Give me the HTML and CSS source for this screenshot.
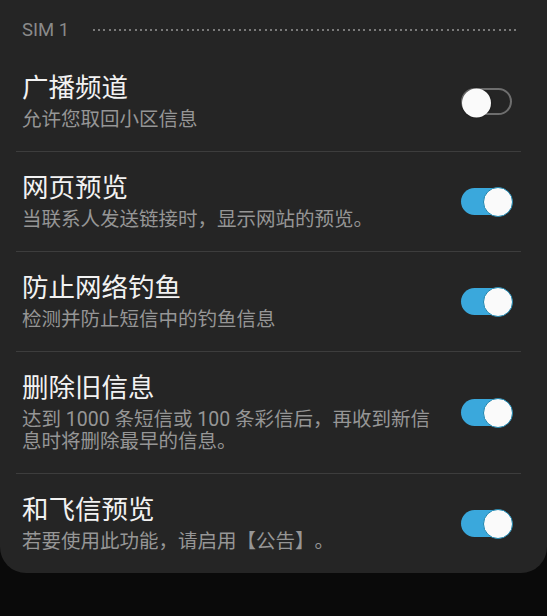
FILE: index.html
```html
<!DOCTYPE html>
<html lang="zh-CN">
<head>
<meta charset="utf-8">
<link rel="stylesheet" href="styles.css">
</head>
<body>
<div class="card">
  <div class="header">
    <span class="header-label">SIM 1</span>
    <span class="header-dots"></span>
  </div>

  <div class="row">
    <div class="text">
      <div class="title">广播频道</div>
      <div class="sub">允许您取回小区信息</div>
    </div>
    <div class="toggle off"><span class="knob"></span></div>
  </div>
  <hr class="divider">

  <div class="row">
    <div class="text">
      <div class="title">网页预览</div>
      <div class="sub">当联系人发送链接时，显示网站的预览。</div>
    </div>
    <div class="toggle on"><span class="knob"></span></div>
  </div>
  <hr class="divider">

  <div class="row">
    <div class="text">
      <div class="title">防止网络钓鱼</div>
      <div class="sub">检测并防止短信中的钓鱼信息</div>
    </div>
    <div class="toggle on"><span class="knob"></span></div>
  </div>
  <hr class="divider">

  <div class="row">
    <div class="text">
      <div class="title">删除旧信息</div>
      <div class="sub">达到 1000 条短信或 100 条彩信后，再收到新信息时将删除最早的信息。</div>
    </div>
    <div class="toggle on"><span class="knob"></span></div>
  </div>
  <hr class="divider">

  <div class="row">
    <div class="text">
      <div class="title">和飞信预览</div>
      <div class="sub">若要使用此功能，请启用【公告】。</div>
    </div>
    <div class="toggle on"><span class="knob"></span></div>
  </div>
</div>
</body>
</html>
```

FILE: styles.css
```css
html, body {
  margin: 0;
  padding: 0;
  background: #0a0a0a;
}

body {
  width: 547px;
  height: 616px;
  overflow: hidden;
  font-family: Roboto, "Noto Sans CJK SC", sans-serif;
  text-spacing-trim: space-all;
}

.card {
  background: #252525;
  border-radius: 0 0 26px 26px;
}

.header {
  display: flex;
  align-items: center;
  height: 52px;
  box-sizing: border-box;
  padding: 8px 29px 0 22px;
}

.header-label {
  font-family: Roboto, sans-serif;
  font-size: 18.5px;
  line-height: 24px;
  color: #8a8a8a;
}

.header-dots {
  flex: 1;
  height: 2px;
  margin-left: 24px;
  background-image: repeating-linear-gradient(to right, #7a7a7a 0 2px, transparent 2px 5.2px);
}

.row {
  display: flex;
  align-items: center;
  padding: 20px 35px 20px 22px;
}

.text {
  flex: 1;
  margin-right: 24px;
}

.title {
  font-size: 26.5px;
  line-height: 32px;
  color: #f2f2f2;
  margin-bottom: 5px;
}

.sub {
  font-size: 19.5px;
  line-height: 22px;
  color: #969696;
}

.divider {
  border: 0;
  height: 1px;
  background: #3d3d3d;
  margin: 0 26px 0 16px;
}

.toggle {
  position: relative;
  width: 51px;
  height: 27px;
  box-sizing: border-box;
  border-radius: 14px;
  flex: none;
}

.toggle.off {
  border: 2px solid #6e6e6e;
}

.toggle.on {
  background: #3aa8dc;
}

.knob {
  position: absolute;
  top: 50%;
  width: 29px;
  height: 29px;
  box-sizing: border-box;
  border-radius: 50%;
  background: #fafafa;
  transform: translateY(-50%);
}

.toggle.off .knob {
  left: -1px;
  top: calc(50% + 1px);
  box-shadow: 0 0 2px rgba(0, 0, 0, 0.5);
}

.toggle.on .knob {
  right: -1px;
  width: 30px;
  height: 30px;
  border: 1.5px solid #1b86b0;
}
```
